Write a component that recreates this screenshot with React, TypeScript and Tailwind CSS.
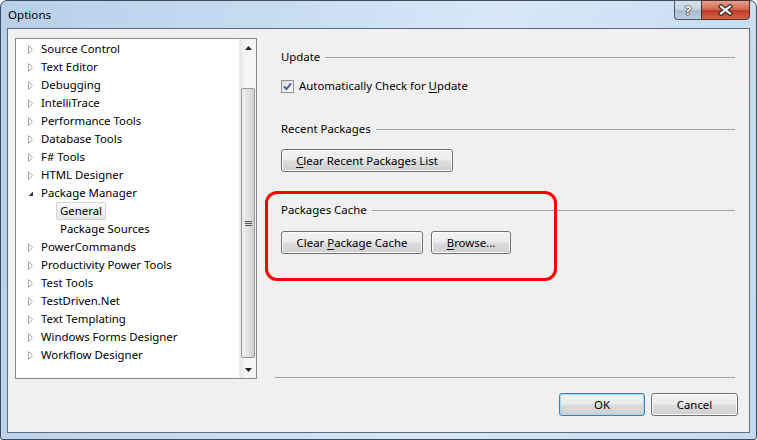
import React from 'react';

const treeItems: { label: string; level: number; open?: boolean; selected?: boolean }[] = [
  { label: 'Source Control', level: 0 },
  { label: 'Text Editor', level: 0 },
  { label: 'Debugging', level: 0 },
  { label: 'IntelliTrace', level: 0 },
  { label: 'Performance Tools', level: 0 },
  { label: 'Database Tools', level: 0 },
  { label: 'F# Tools', level: 0 },
  { label: 'HTML Designer', level: 0 },
  { label: 'Package Manager', level: 0, open: true },
  { label: 'General', level: 1, selected: true },
  { label: 'Package Sources', level: 1 },
  { label: 'PowerCommands', level: 0 },
  { label: 'Productivity Power Tools', level: 0 },
  { label: 'Test Tools', level: 0 },
  { label: 'TestDriven.Net', level: 0 },
  { label: 'Text Templating', level: 0 },
  { label: 'Windows Forms Designer', level: 0 },
  { label: 'Workflow Designer', level: 0 },
];

function Arrow({ open }: { open?: boolean }) {
  if (open) {
    return (
      <svg width="7" height="9" viewBox="0 0 7 9">
        <path d="M6 2.5 L6 7 L1.5 7 Z" fill="#3c3c3c" />
      </svg>
    );
  }
  return (
    <svg width="7" height="9" viewBox="0 0 7 9">
      <path d="M1.5 0.5 L5.5 4.5 L1.5 8.5 Z" fill="#fff" stroke="#a6a6a6" />
    </svg>
  );
}

function WinButton({ children, className, isDefault }: { children: React.ReactNode; className: string; isDefault?: boolean }) {
  return (
    <div
      className={`${className} h-[23px] flex items-center justify-center rounded-[3px] border text-[11.4px] text-black bg-[linear-gradient(#f3f3f3_0%,#ebebeb_48%,#dddddd_52%,#cfcfcf_100%)] ${
        isDefault ? 'border-[#3c7fb1] shadow-[inset_0_0_0_1px_#9fdcf5]' : 'border-[#707070] shadow-[inset_0_0_0_1px_#fbfbfb]'
      }`}
    >
      {children}
    </div>
  );
}

function GroupHeader({ title }: { title: string }) {
  return (
    <div className="h-[16px] flex items-center pl-[6px] gap-[5px]">
      <span className="text-[11.4px] leading-none">{title}</span>
      <div className="flex-1 h-px bg-[#a0a0a0]" />
    </div>
  );
}

export default function App() {
  return (
    <div className="w-[757px] h-[440px] font-['Noto_Sans',sans-serif] text-black">
      <div className="w-full h-full flex flex-col border border-[#3d4b5a] rounded-t-[7px] rounded-b-[3px] px-[6px] pb-[6px] bg-[linear-gradient(100deg,#b8cfe8_0%,#c9ddf2_35%,#d7e7f7_60%,#c6daef_100%)]">
        {/* title bar */}
        <div className="h-[27px] flex items-start justify-between">
          <span className="pl-[1px] pt-[6px] text-[11.6px] leading-[16px]">Options</span>
          <div className="flex -mt-px">
            <div className="w-[27px] h-[20px] flex items-center justify-center border border-[#4e5866] border-r-0 rounded-bl-[4px] bg-[linear-gradient(#d9e3ee_0%,#c3d1e0_48%,#a9bbcf_52%,#bccde0_100%)]">
              <span className="text-[13px] font-bold leading-none text-white [text-shadow:0_0_1px_#222,0_0_1px_#222,0_0_1px_#222,0_0_1px_#222]">?</span>
            </div>
            <div className="w-[49px] h-[20px] flex items-center justify-center border border-[#4f2f2a] rounded-br-[4px] bg-[linear-gradient(#e6a090_0%,#d2664f_48%,#bf3a22_52%,#d4644a_100%)]">
              <svg width="15" height="12" viewBox="0 0 15 12">
                <path d="M3 2.5 L12 9.5 M12 2.5 L3 9.5" stroke="#3a2a28" strokeWidth="4.5" strokeLinecap="square" />
                <path d="M3 2.5 L12 9.5 M12 2.5 L3 9.5" stroke="#fff" strokeWidth="2.2" strokeLinecap="square" />
              </svg>
            </div>
          </div>
        </div>

        {/* client area */}
        <div className="flex-1 flex flex-col border border-[#5e6e80] bg-[#f0f0f0]">
          <div className="flex pl-[7px] pt-[9px]">
            {/* tree view */}
            <div className="w-[242px] h-[341px] border border-[#828790] bg-white flex">
              <div className="flex-1 pt-px text-[11.4px]">
                {treeItems.map((it) =>
                  it.level === 0 ? (
                    <div key={it.label} className="h-[18px] flex items-center pl-[11px]">
                      <div className="w-[14px] flex items-center">
                        <Arrow open={it.open} />
                      </div>
                      <span className="leading-none">{it.label}</span>
                    </div>
                  ) : (
                    <div key={it.label} className="h-[18px] flex items-center pl-[40px]">
                      <span
                        className={`h-[18px] flex items-center px-[3px] leading-none rounded-[2px] border ${
                          it.selected ? 'border-[#d4d4d4] bg-[linear-gradient(#fafafa,#e8e8e8)]' : 'border-transparent'
                        }`}
                      >
                        {it.label}
                      </span>
                    </div>
                  )
                )}
              </div>
              {/* scrollbar */}
              <div className="w-[17px] flex flex-col bg-[linear-gradient(to_right,#e7e7e7,#f5f5f5_30%,#f5f5f5)] border-l border-[#ececec]">
                <div className="h-[17px] flex items-center justify-center">
                  <svg width="7" height="4" viewBox="0 0 7 4">
                    <path d="M0 4 L3.5 0 L7 4 Z" fill="#222" />
                  </svg>
                </div>
                <div className="mt-[32px] h-[270px] mx-px rounded-[2px] border border-[#979797] bg-[linear-gradient(to_right,#f0f0f0,#e2e2e2_50%,#d0d0d0)] flex items-center justify-center">
                  <div className="flex flex-col gap-[1px]">
                    <div className="w-[7px] h-px bg-[#555]" />
                    <div className="w-[7px] h-px bg-[#555]" />
                    <div className="w-[7px] h-px bg-[#555]" />
                  </div>
                </div>
                <div className="flex-1" />
                <div className="h-[17px] flex items-center justify-center">
                  <svg width="7" height="4" viewBox="0 0 7 4">
                    <path d="M0 0 L7 0 L3.5 4 Z" fill="#222" />
                  </svg>
                </div>
              </div>
            </div>

            {/* right panel */}
            <div className="relative ml-[18px] w-[460px] h-[340px] flex flex-col border-b border-[#a0a0a0]">
              <div className="mt-[11px]">
                <GroupHeader title="Update" />
              </div>
              <div className="mt-[13px] h-[16px] flex items-center pl-[6px] gap-[5px]">
                <div className="w-[13px] h-[13px] border border-[#8e8f8f] bg-[linear-gradient(135deg,#dcdcdc,#fafafa)] flex items-center justify-center">
                  <svg width="9" height="9" viewBox="0 0 9 9">
                    <path d="M1 4.5 L3.5 7 L8 1.5" fill="none" stroke="#3f5a95" strokeWidth="1.9" />
                  </svg>
                </div>
                <span className="text-[11.4px] leading-none">
                  Automatically Check for <span className="underline underline-offset-2">U</span>pdate
                </span>
              </div>

              <div className="mt-[27px]">
                <GroupHeader title="Recent Packages" />
              </div>
              <div className="mt-[12px] pl-[6px] flex">
                <WinButton className="w-[172px]">
                  <span>
                    <span className="underline underline-offset-2">C</span>lear Recent Packages List
                  </span>
                </WinButton>
              </div>

              <div className="mt-[30px]">
                <GroupHeader title="Packages Cache" />
              </div>
              <div className="mt-[13px] pl-[6px] flex gap-[8px]">
                <WinButton className="w-[142px]">
                  <span>
                    Clear <span className="underline underline-offset-2">P</span>ackage Cache
                  </span>
                </WinButton>
                <WinButton className="w-[80px]">
                  <span>
                    <span className="underline underline-offset-2">B</span>rowse...
                  </span>
                </WinButton>
              </div>

              {/* highlight annotation */}
              <div className="absolute left-[-10px] top-[153px] w-[292px] h-[90px] border-[3px] border-[#ff0000] rounded-[12px]" />
            </div>
          </div>

          <div className="mt-[14px] flex justify-end gap-[6px] pr-[11px]">
            <WinButton className="w-[86px]" isDefault>
              OK
            </WinButton>
            <WinButton className="w-[87px]">Cancel</WinButton>
          </div>
        </div>
      </div>
    </div>
  );
}
